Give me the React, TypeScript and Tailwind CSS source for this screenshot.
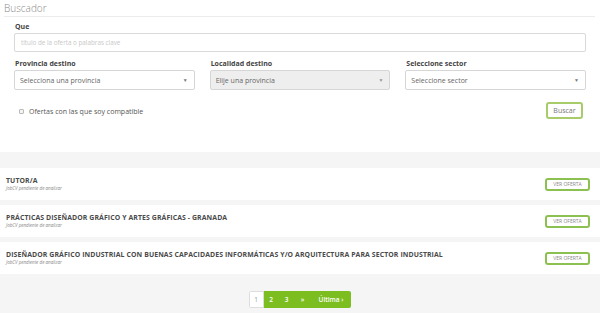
import React from "react";

const jobs = [
  "TUTOR/A",
  "PRÁCTICAS DISEÑADOR GRÁFICO Y ARTES GRÁFICAS - GRANADA",
  "DISEÑADOR GRÁFICO INDUSTRIAL CON BUENAS CAPACIDADES INFORMÁTICAS Y/O ARQUITECTURA PARA SECTOR INDUSTRIAL",
];

function Select({ text, disabled }: { text: string; disabled?: boolean }) {
  return (
    <div
      className={`h-[20px] border border-[#d6d6d6] rounded-[2px] flex items-center justify-between pl-[5px] pr-[6px] ${
        disabled ? "bg-[#eeeeee]" : "bg-white"
      }`}
    >
      <span className="text-[7px] text-[#666] leading-[9px]">{text}</span>
      <span className={`text-[5px] leading-[6px] ${disabled ? "text-[#999]" : "text-[#777]"}`}>▼</span>
    </div>
  );
}

export default function App() {
  return (
    <div
      className="w-[600px] h-[313px] bg-[#f5f5f5] overflow-hidden"
      style={{ fontFamily: "'Open Sans', 'Liberation Sans', sans-serif" }}
    >
      <div className="bg-white h-[152px] pt-[2px]">
        <div className="ml-[4px] mr-[5px] border-b border-[#ececec] pb-[2px] text-[10px] text-[#8a8a8a] font-light leading-[12px]">
          Buscador
        </div>
        <div className="px-[14px] pt-[5px]">
          <div className="text-[7px] font-bold text-[#444] leading-[9px] ml-[1px]">Que</div>
          <div className="mt-[2px] h-[19px] border border-[#d9d9d9] rounded-[2px] flex items-center px-[6px]">
            <span className="text-[6.3px] text-[#c8c8c8] leading-[8px]">título de la oferta o palabras clave</span>
          </div>
          <div className="grid grid-cols-3 gap-x-[15px] mt-[7px]">
            <div>
              <div className="text-[7px] font-bold text-[#444] leading-[9px] ml-[1px]">Provincia destino</div>
              <div className="mt-[2px]">
                <Select text="Selecciona una provincia" />
              </div>
            </div>
            <div>
              <div className="text-[7px] font-bold text-[#444] leading-[9px] ml-[1px]">Localidad destino</div>
              <div className="mt-[2px]">
                <Select text="Elije una provincia" disabled />
              </div>
            </div>
            <div>
              <div className="text-[7px] font-bold text-[#444] leading-[9px] ml-[1px]">Seleccione sector</div>
              <div className="mt-[2px]">
                <Select text="Seleccione sector" />
              </div>
            </div>
          </div>
          <div className="flex items-center justify-between mt-[12px]">
            <div className="flex items-center ml-[5px] mt-[1px]">
              <span className="w-[5px] h-[5px] border border-[#bbb] bg-[#f3f3f3] rounded-[1px]" />
              <span className="ml-[5px] text-[7px] text-[#555] leading-[9px]">Ofertas con las que soy compatible</span>
            </div>
            <button className="w-[37px] h-[17px] border-2 border-[#a8cc6a] rounded-[3px] bg-white text-[7px] text-[#777] leading-[9px] flex items-center justify-center mr-[3px]">
              Buscar
            </button>
          </div>
        </div>
      </div>

      <div className="mt-[16px] flex flex-col gap-[5px]">
        {jobs.map((j) => (
          <div key={j} className="bg-white h-[32px] flex items-center justify-between pl-[6px] pr-[10px]">
            <div className="flex flex-col mt-[-1px]">
              <span className="text-[6.9px] font-bold text-[#4a4a4a] leading-[9px] tracking-[0.1px]">{j}</span>
              <span className="text-[4.5px] italic text-[#888] leading-[6px]">JobCV pendiente de analizar</span>
            </div>
            <button className="w-[45px] h-[13px] border-2 border-[#8cc152] rounded-[3px] bg-white text-[5px] text-[#888] leading-[6px] flex items-center justify-center">
              VER OFERTA
            </button>
          </div>
        ))}
      </div>

      <div className="flex justify-center mt-[17px]">
        <div className="flex h-[17px] rounded-[2px] overflow-hidden">
          <span className="w-[15px] border border-[#ddd] bg-white text-[6.5px] text-[#999] flex items-center justify-center">1</span>
          <div className="flex items-center bg-[#7cbd1f] text-white text-[6.5px] font-semibold">
            <span className="w-[15px] text-center">2</span>
            <span className="w-[16px] text-center">3</span>
            <span className="w-[16px] text-center">»</span>
            <span className="px-[8px]">Última ›</span>
          </div>
        </div>
      </div>
    </div>
  );
}
